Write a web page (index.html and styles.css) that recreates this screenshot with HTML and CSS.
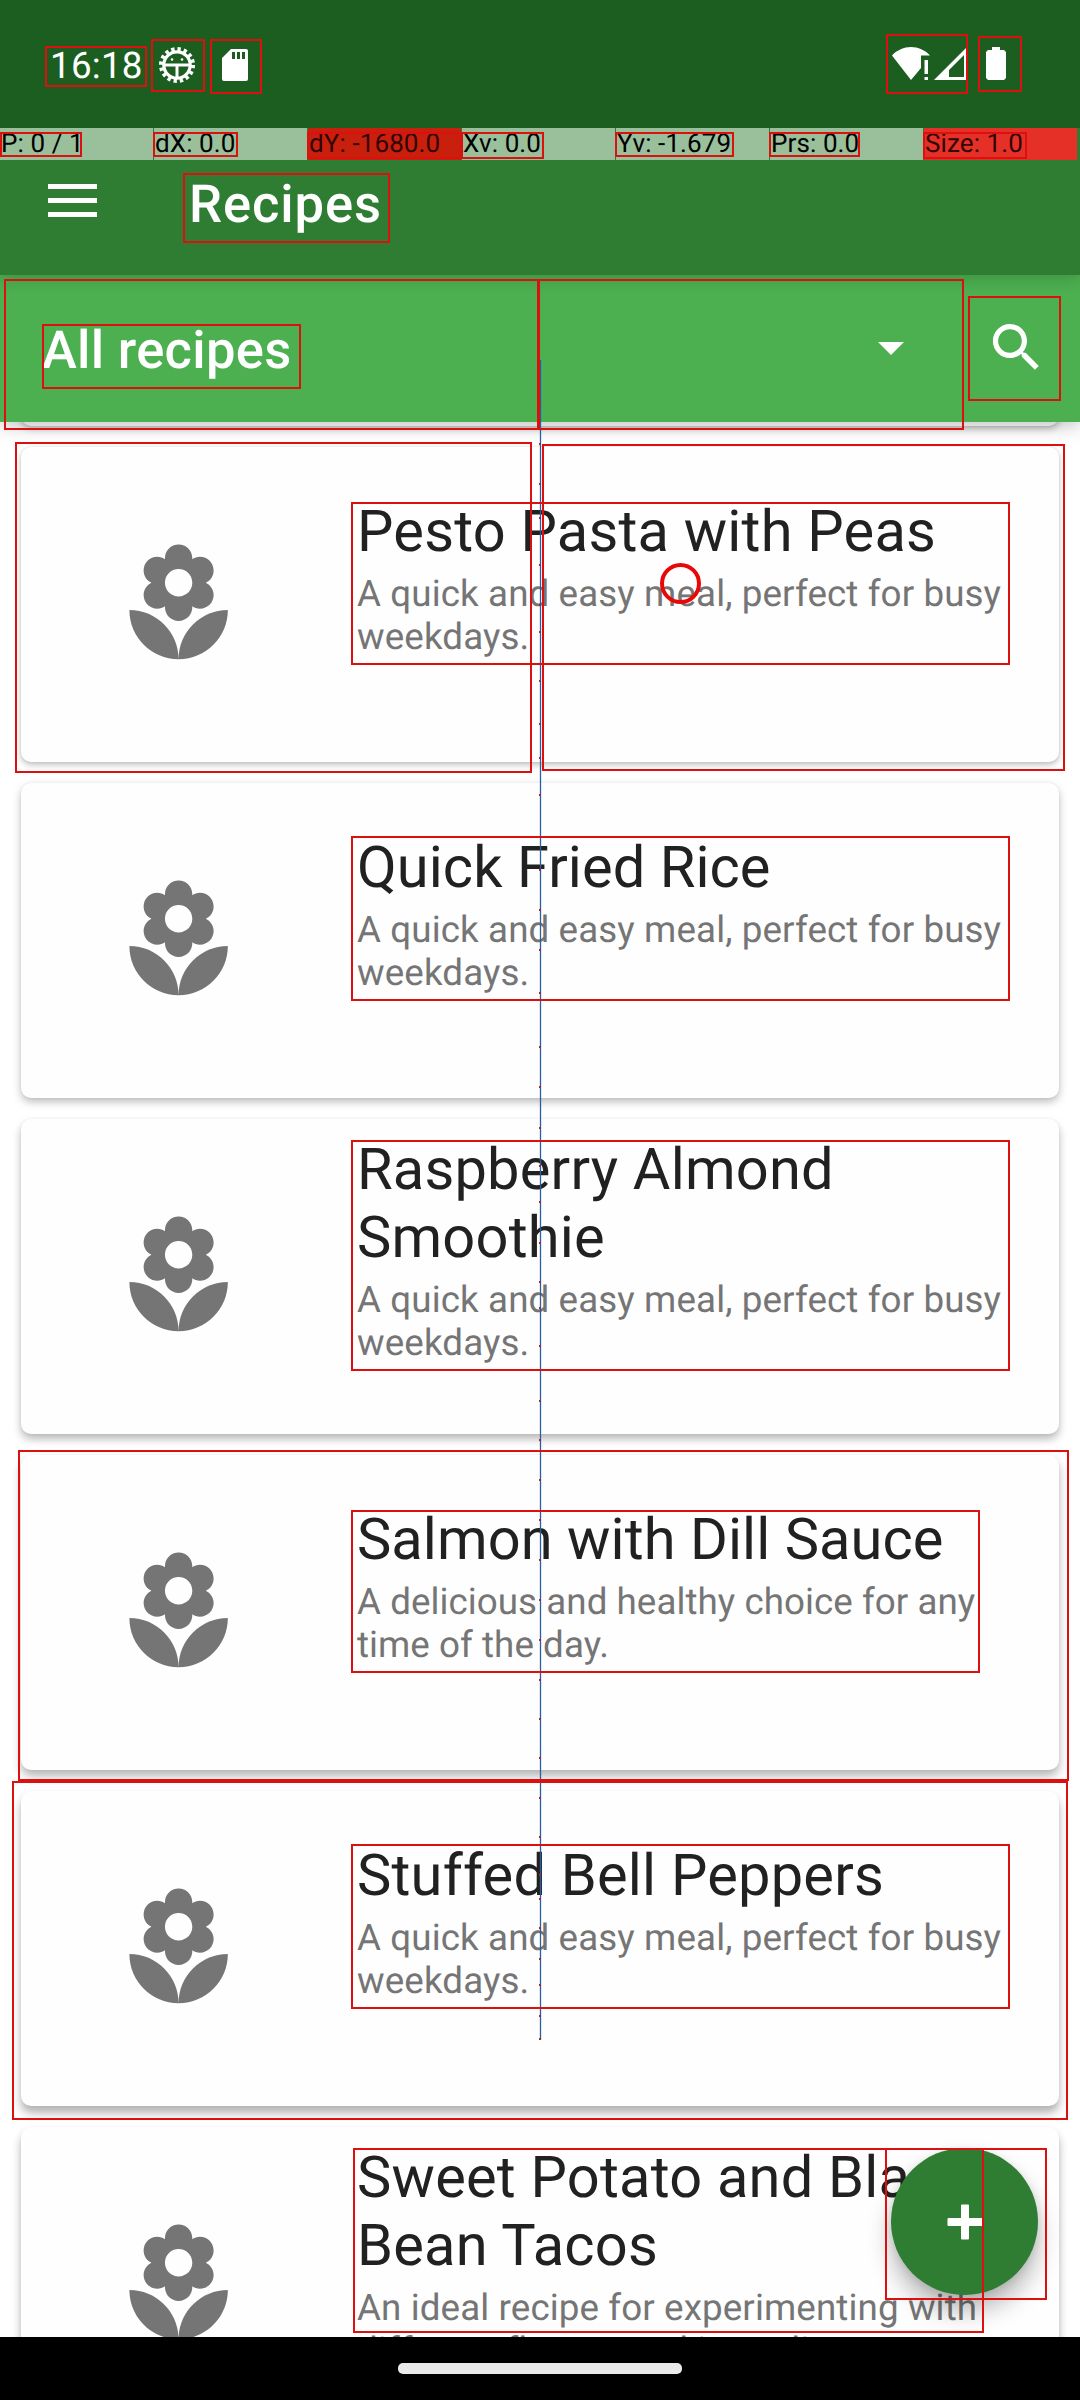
FILE: index.html
```html
<!DOCTYPE html>
<html lang="en">
<head>
<meta charset="utf-8">
<title>Recipes</title>
<link rel="stylesheet" href="styles.css">
</head>
<body>
<svg class="defs" width="0" height="0" aria-hidden="true">
  <symbol id="florist" viewBox="0 0 24 24"><path d="M12 22c4.97 0 9-4.03 9-9-4.97 0-9 4.03-9 9zM5.600 10.250c0 1.380 1.120 2.500 2.500 2.500.53 0 1.010-.16 1.420-.44l-.02.19c0 1.380 1.120 2.500 2.500 2.500s2.500-1.120 2.500-2.500l-.02-.19c.4.28.89.44 1.420.44 1.380 0 2.500-1.120 2.500-2.500 0-1-.59-1.850-1.430-2.250.84-.4 1.430-1.250 1.430-2.250 0-1.380-1.120-2.500-2.500-2.500-.53 0-1.010.16-1.420.44l.02-.19C14.500 2.120 13.380 1 12 1S9.500 2.120 9.500 3.500l.02.19c-.4-.28-.89-.44-1.420-.44-1.380 0-2.500 1.120-2.500 2.500 0 1 .59 1.850 1.430 2.250-.84.4-1.430 1.250-1.430 2.250zM12 5.500c1.380 0 2.500 1.120 2.500 2.500s-1.120 2.500-2.500 2.500S9.500 9.380 9.500 8s1.120-2.500 2.500-2.500zM3 13c0 4.970 4.030 9 9 9 0-4.970-4.030-9-9-9z"/></symbol>
</svg>

<header class="status">
  <span class="clock">16:18</span>
  <svg class="gear" viewBox="-19 -19 38 38">
    <circle r="13.200" fill="none" stroke="#fff" stroke-width="3.200"/>
    <circle r="16" fill="none" stroke="#fff" stroke-width="4" stroke-dasharray="3.300 2.984"/>
    <path d="M-13-1.500H13V1.500H1.500V13H-1.500V1.500H-13z" fill="#fff"/>
    <circle cx="-5" cy="-5.500" r="1.300" fill="#fff"/><circle cx="5" cy="-5.500" r="1.300" fill="#fff"/>
  </svg>
  <svg class="sd" viewBox="0 0 26 32"><path fill="#fff" fill-rule="evenodd" d="M9 0H24a2 2 0 0 1 2 2V30a2 2 0 0 1-2 2H2a2 2 0 0 1-2-2V9zM10 3V10H13V3zM15 3V10H18V3zM20 3V10H23V3z"/></svg>
  <svg class="signal" viewBox="0 0 74 33">
    <path fill="#fff" d="M0 8.500C5 3 12 0 19 0s14 3 19 8.500H29V21L19 33z"/>
    <path fill="#fff" d="M32.500 13H36V27H32.500zM32.500 30H36V33H32.500z"/>
    <path fill="#fff" fill-rule="evenodd" d="M74 1V33H42zM72 8L57 23V30H72z"/>
  </svg>
  <svg class="battery" viewBox="0 0 20 33"><path fill="#fff" d="M6 0H14V3H18L20 5V31L18 33H2L0 31V5L2 3H6z"/></svg>
</header>

<div class="pointer-bar">
  <span>P: 0 / 1</span><span>dX: 0.0</span><span class="hot deep">dY: -1680.0</span><span>Xv: 0.0</span><span>Yv: -1.679</span><span>Prs: 0.0</span><span class="hot">Size: 1.0</span>
</div>

<div class="app-bar">
  <svg class="menu" viewBox="0 0 49 33"><path fill="#fff" d="M0 0H49V5H0zM0 14H49V19H0zM0 28H49V33H0z"/></svg>
  <h1>Recipes</h1>
</div>

<div class="filter">
  <span class="label">All recipes</span>
  <svg class="caret" viewBox="0 0 26 13"><path fill="#fff" d="M0 0H26L13 13z"/></svg>
  <svg class="search" viewBox="0 0 24 24"><path fill="#fff" d="M15.500 14h-.79l-.28-.27C15.410 12.590 16 11.110 16 9.500 16 5.910 13.090 3 9.500 3S3 5.910 3 9.500 5.910 16 9.500 16c1.610 0 3.090-.59 4.230-1.570l.27.28v.79l5 4.990L20.490 19l-4.990-5zm-6 0C7.010 14 5 11.990 5 9.500S7.010 5 9.500 5 14 7.010 14 9.500 11.990 14 9.500 14z"/></svg>
</div>

<main class="list">
  <article class="card previous"></article>
  <article class="card s1"><div class="thumb"><svg><use href="#florist"/></svg></div><div class="text"><h2>Pesto Pasta with Peas</h2><p>A quick and easy meal, perfect for busy<br>weekdays.</p></div></article>
  <article class="card s2"><div class="thumb"><svg><use href="#florist"/></svg></div><div class="text"><h2>Quick Fried Rice</h2><p>A quick and easy meal, perfect for busy<br>weekdays.</p></div></article>
  <article class="card s3"><div class="thumb"><svg><use href="#florist"/></svg></div><div class="text"><h2>Raspberry Almond<br>Smoothie</h2><p>A quick and easy meal, perfect for busy<br>weekdays.</p></div></article>
  <article class="card s4"><div class="thumb"><svg><use href="#florist"/></svg></div><div class="text"><h2>Salmon with Dill Sauce</h2><p>A delicious and healthy choice for any<br>time of the day.</p></div></article>
  <article class="card s5"><div class="thumb"><svg><use href="#florist"/></svg></div><div class="text"><h2>Stuffed Bell Peppers</h2><p>A quick and easy meal, perfect for busy<br>weekdays.</p></div></article>
  <article class="card s5"><div class="thumb"><svg><use href="#florist"/></svg></div><div class="text"><h2>Sweet Potato and Black<br>Bean Tacos</h2><p>An ideal recipe for experimenting with<br>different flavors and ingredients.</p></div></article>
</main>

<nav class="nav"><span class="handle"></span></nav>

<button class="fab" aria-label="Add"><svg viewBox="0 0 36 36"><path fill="#fff" d="M15 0.500H21a1 1 0 0 1 1 1V14H34.500a1 1 0 0 1 1 1V21a1 1 0 0 1-1 1H22V34.500a1 1 0 0 1-1 1H15a1 1 0 0 1-1-1V22H1.500a1 1 0 0 1-1-1V15a1 1 0 0 1 1-1H14V1.500a1 1 0 0 1 1-1z"/></svg></button>

<svg class="overlay" viewBox="0 0 1080 2400">
  <path class="trail" d="M540.500 360V2040"/>
  <path class="dots" d="M539 403h2M539 444h2M539 484h2M539 518h2M539 565h2M539 605h2M539 632h2M539 681h2M539 724h2M539 758h2M539 795h2M539 837h2M539 870h2M539 910h2M539 950h2M539 993h2M539 1047h2M539 1087h2M539 1128h2M539 1166h2M539 1202h2M539 1243h2M539 1282h2M539 1308h2M539 1346h2M539 1401h2M539 1440h2M539 1480h2M539 1520h2M539 1560h2M539 1600h2M539 1640h2M539 1680h2M539 1719h2M539 1758h2M539 1798h2M539 1837h2M539 1875h2M539 1899h2M539 1928h2M539 1959h2M539 1985h2M539 2016h2M539 2039h2"/>
  <circle class="touch" cx="680.500" cy="583.500" r="18.500"/>
  <g class="bounds">
    <rect x="46" y="47" width="100" height="39"/>
    <rect x="152" y="40" width="52" height="51"/>
    <rect x="211" y="40" width="50" height="53"/>
    <rect x="887" y="35" width="80" height="58"/>
    <rect x="979" y="37" width="42" height="54"/>
    <rect x="1" y="133" width="80" height="23"/>
    <rect x="154" y="133" width="83" height="23"/>
    <rect x="308" y="133" width="153" height="25"/>
    <rect x="462" y="133" width="81" height="25"/>
    <rect x="616" y="133" width="117" height="23"/>
    <rect x="770" y="133" width="89" height="23"/>
    <rect x="924" y="133" width="102" height="25"/>
    <rect x="184" y="174" width="205" height="68"/>
    <rect x="5" y="280" width="533" height="149"/>
    <rect x="539" y="280" width="424" height="149"/>
    <rect x="43" y="325" width="257" height="63"/>
    <rect x="969" y="297" width="91" height="103"/>
    <rect x="16" y="443" width="515" height="329"/>
    <rect x="543" y="445" width="521" height="325"/>
    <rect x="352" y="503" width="657" height="161"/>
    <rect x="352" y="837" width="657" height="163"/>
    <rect x="352" y="1141" width="657" height="229"/>
    <rect x="19" y="1451" width="1049" height="329"/>
    <rect x="352" y="1511" width="627" height="161"/>
    <rect x="13" y="1782" width="1054" height="337"/>
    <rect x="352" y="1845" width="657" height="163"/>
    <rect x="354" y="2149" width="629" height="183"/>
    <rect x="886" y="2149" width="160" height="150"/>
  </g>
</svg>
</body>
</html>
```
FILE: styles.css
```css
* { box-sizing: border-box; }
body {
  margin: 0;
  width: 1080px;
  height: 2400px;
  display: flex;
  flex-direction: column;
  position: relative;
  overflow: hidden;
  background: #fff;
  font-family: Roboto, "Liberation Sans", sans-serif;
  text-rendering: geometricPrecision;
}
svg { display: block; flex: none; }
h1, h2, p { margin: 0; font-weight: 400; }
.defs { position: absolute; }

.status {
  height: 128px;
  flex: none;
  display: flex;
  align-items: flex-start;
  background: #1b5e20;
  padding: 44px 74px 0 50px;
  color: #fff;
}
.clock { font-size: 36.750px; line-height: 43px; width: 108px; white-space: nowrap; letter-spacing: .25px; }
.gear { width: 38px; height: 38px; margin-top: 2px; }
.sd { width: 26px; height: 32px; margin: 5px 0 0 26px; }
.signal { width: 74px; height: 33px; margin: 3px 20px 0 auto; }
.battery { width: 20px; height: 33px; margin-top: 3px; }

.pointer-bar {
  height: 32px;
  flex: none;
  display: grid;
  grid-template-columns: repeat(7, 153px);
  column-gap: 1px;
  background: #2e7d32;
  font-size: 26px;
  line-height: 33px;
  color: #000;
}
.pointer-bar span { height: 32px; background: #99bf9b; padding-left: 1px; white-space: nowrap; letter-spacing: .1px; }
.pointer-bar .hot { background: #e53028; color: #330606; }
.pointer-bar .deep { background: #c91f0d; }

.app-bar {
  height: 115px;
  flex: none;
  display: flex;
  align-items: flex-start;
  background: #2e7d32;
  color: #fff;
  padding: 13px 0 0 48px;
  position: relative;
  z-index: 3;
  box-shadow: 0 2px 16px rgba(0, 0, 0, .2);
  clip-path: inset(0 0 -30px 0);
}
.menu { width: 49px; height: 33px; margin-top: 11px; }
.app-bar h1 { font-size: 52.500px; line-height: 62px; font-weight: 500; margin: 0 0 0 92px; letter-spacing: .9px; }

.filter {
  height: 147px;
  flex: none;
  display: flex;
  align-items: center;
  background: #4caf50;
  color: #fff;
  padding: 0 32px 0 42px;
  position: relative;
  z-index: 2;
  box-shadow: 0 3px 18px rgba(0, 0, 0, .26);
}
.label { font-size: 52.500px; line-height: 62px; font-weight: 500; flex: 1; padding-top: 2px; letter-spacing: .3px; }
.caret { width: 26px; height: 13px; margin-right: 81px; }
.search { width: 63px; height: 63px; margin-top: -2px; }

.list {
  flex: 1;
  min-height: 0;
  overflow: hidden;
  display: flex;
  flex-direction: column;
  gap: 21px;
  padding: 0 21px;
}
.card {
  height: 315px;
  flex: none;
  display: flex;
  background: #fefefe;
  border-radius: 10px;
  box-shadow: 0 3px 6px rgba(0, 0, 0, .24), 0 0 3px rgba(0, 0, 0, .08);
}
.previous { height: 60px; margin-top: -56px; }
.s2 { box-shadow: 0 4px 8px rgba(0, 0, 0, .26), 0 0 3px rgba(0, 0, 0, .06); }
.s3 { box-shadow: 0 5px 9px rgba(0, 0, 0, .28), 0 0 3px rgba(0, 0, 0, .05); }
.s4 { box-shadow: 0 6px 10px rgba(0, 0, 0, .29), 0 0 3px rgba(0, 0, 0, .04); }
.s5 { box-shadow: 0 7px 10px rgba(0, 0, 0, .3), 0 0 3px rgba(0, 0, 0, .04); }
.thumb { width: 315px; display: flex; align-items: center; justify-content: center; }
.thumb svg { width: 131.250px; height: 131.250px; fill: #757575; }
.text {
  flex: 1;
  display: flex;
  flex-direction: column;
  justify-content: center;
  padding: 0 0 53px 21px;
  white-space: nowrap;
}
.text h2 { font-size: 57.750px; line-height: 68px; color: #212121; letter-spacing: .22px; }
.text p { font-size: 36.750px; line-height: 43px; color: #757575; margin-top: 6px; letter-spacing: .11px; }
.s2 h2, .s4 h2 { letter-spacing: .08px; }
.s4 p { letter-spacing: .05px; }

.nav { height: 63px; flex: none; background: #000; display: flex; justify-content: center; padding-top: 26px; position: relative; z-index: 3; }
.handle { width: 284px; height: 11px; border-radius: 5px; background: #ebebeb; }

.fab {
  position: absolute;
  left: 891px;
  top: 2148px;
  width: 147px;
  height: 147px;
  border: 0;
  padding: 0;
  border-radius: 50%;
  background: #2e7d32;
  display: flex;
  align-items: center;
  justify-content: center;
  box-shadow: 0 16px 24px rgba(0, 0, 0, .28), 0 2px 8px rgba(0, 0, 0, .1);
}
.fab svg { width: 36px; height: 36px; }

.overlay { position: absolute; left: 0; top: 0; width: 1080px; height: 2400px; z-index: 4; pointer-events: none; }
.bounds rect { fill: none; stroke: #dd1010; stroke-width: 2; }
.trail { stroke: #2a5f9e; stroke-width: 1.300; }
.dots { stroke: #a02838; stroke-width: 2; }
.touch { fill: none; stroke: #e80808; stroke-width: 4; }
```
